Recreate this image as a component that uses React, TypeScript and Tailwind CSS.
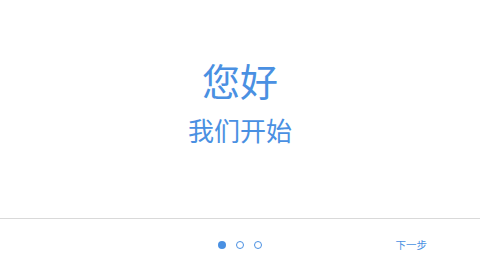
import React, { useState } from 'react'

const STEPS = 3

const App = () => {
  const [step, setStep] = useState(0)

  const handleNextClick = () => {
    setStep((prev) => (prev + 1) % STEPS)
  }

  return (
    <div
      className="flex h-[270px] w-[480px] flex-col bg-white"
      style={{ fontFamily: '"Noto Sans CJK SC", "Noto Sans", sans-serif' }}
    >
      <div className="flex h-[218px] flex-col items-center pt-[57px] text-[#4a90e2]">
        <h1 className="text-[38px] leading-[46px] font-normal">您好</h1>
        <p className="mt-[9px] text-[26px] leading-[36px]">我们开始</p>
      </div>
      <div className="relative flex flex-1 items-center justify-center border-t border-[#d9d9d9]">
        <div className="flex items-center gap-[10px]">
          {Array.from({ length: STEPS }).map((_, index) => (
            <span
              key={index}
              className={
                index === step
                  ? 'h-[8px] w-[8px] rounded-full bg-[#4a90e2]'
                  : 'h-[8px] w-[8px] rounded-full border-[1.5px] border-[#4a90e2] bg-white'
              }
            />
          ))}
        </div>
        <button
          className="absolute top-[18px] right-[53px] text-[10.5px] leading-[16px] text-[#4a90e2]"
          onClick={handleNextClick}
        >
          下一步
        </button>
      </div>
    </div>
  )
}

export default App
